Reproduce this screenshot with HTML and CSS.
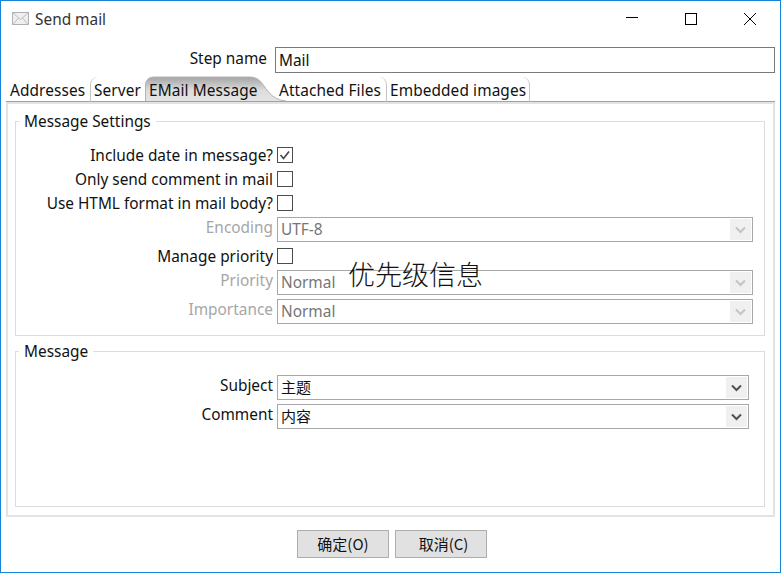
FILE: index.html
```html
<!DOCTYPE html>
<html lang="en">
<head>
<meta charset="utf-8">
<title>Send mail</title>
<link rel="stylesheet" href="styles.css">
</head>
<body>
<div class="window">
  <header class="titlebar">
    <svg class="mail-icon" width="18" height="14" viewBox="0 0 18 14">
      <rect x="0.5" y="0.5" width="16" height="12" fill="#efefef" stroke="#b0b0b0"/>
      <path d="M1 1l7.5 6.5L16 1M1 12.5l5.5-6.5M16 12.5L10.500 6" fill="none" stroke="#bcbcbc"/>
    </svg>
    <span class="title">Send mail</span>
    <div class="controls">
      <svg class="ctl" width="14" height="14" viewBox="0 0 14 14"><path d="M1 5.500h12" stroke="#000" fill="none"/></svg>
      <svg class="ctl" width="14" height="14" viewBox="0 0 14 14"><rect x="1.500" y="1.500" width="11" height="11" stroke="#000" fill="none"/></svg>
      <svg class="ctl" width="14" height="14" viewBox="0 0 14 14"><path d="M1 1l12 12M13 1L1 13" stroke="#000" fill="none"/></svg>
    </div>
  </header>

  <div class="step-row">
    <label class="step-label">Step name</label>
    <div class="step-input">Mail</div>
  </div>

  <nav class="tabs">
    <div class="tab tab-first">Addresses</div>
    <div class="tab tab-server">Server</div>
    <div class="tab tab-active">
      <svg class="tab-shape" width="141" height="26" viewBox="0 0 141 26">
        <defs>
          <linearGradient id="tabfill" x1="0" y1="0" x2="0" y2="1">
            <stop offset="0" stop-color="#a4a4a4"/>
            <stop offset="0.55" stop-color="#dcdcdc"/>
            <stop offset="1" stop-color="#e4e4e4"/>
          </linearGradient>
        </defs>
        <path d="M0.500 25V9C0.500 4 4 1 9 1H104C112 1 115 4 119 10C124 17 129 24 141 25Z" fill="url(#tabfill)"/>
        <path d="M0.500 25V9C0.500 4 4 1 9 1H104C112 1 115 4 119 10C124 17 129 24 141 25" fill="none" stroke="#b4b4b4"/>
      </svg>
      <span class="tab-text">EMail Message</span>
    </div>
    <div class="tab tab-attached">Attached Files</div>
    <div class="tab tab-embedded">Embedded images</div>
  </nav>

  <main class="panel">
    <fieldset class="group group-settings">
      <legend><span class="legend-text">Message Settings</span></legend>
      <div class="row first">
        <label class="lbl">Include date in message?</label>
        <span class="check">
          <svg width="14" height="14" viewBox="0 0 14 14"><path d="M2.500 7l3 3.500L11 3.500" fill="none" stroke="#444" stroke-width="1.600"/></svg>
        </span>
      </div>
      <div class="row">
        <label class="lbl">Only send comment in mail</label>
        <span class="check"></span>
      </div>
      <div class="row">
        <label class="lbl">Use HTML format in mail body?</label>
        <span class="check"></span>
      </div>
      <div class="row near">
        <label class="lbl off up">Encoding</label>
        <div class="combo off"><span class="val">UTF-8</span><span class="arrow"><svg width="11" height="8" viewBox="0 0 11 8"><path d="M1 1.500l4.500 4.500L10 1.500" fill="none" stroke="#c4c4c4" stroke-width="2"/></svg></span></div>
      </div>
      <div class="row near">
        <label class="lbl">Manage priority</label>
        <span class="check"></span>
      </div>
      <div class="row near">
        <label class="lbl off up">Priority</label>
        <div class="combo off"><span class="val">Normal</span><span class="arrow"><svg width="11" height="8" viewBox="0 0 11 8"><path d="M1 1.500l4.500 4.500L10 1.500" fill="none" stroke="#c4c4c4" stroke-width="2"/></svg></span></div>
      </div>
      <div class="row tight">
        <label class="lbl off up">Importance</label>
        <div class="combo off"><span class="val">Normal</span><span class="arrow"><svg width="11" height="8" viewBox="0 0 11 8"><path d="M1 1.500l4.500 4.500L10 1.500" fill="none" stroke="#c4c4c4" stroke-width="2"/></svg></span></div>
      </div>
      <div class="overlay-note">优先级信息</div>
    </fieldset>

    <fieldset class="group group-message">
      <legend><span class="legend-text">Message</span></legend>
      <div class="row first">
        <label class="lbl up">Subject</label>
        <div class="combo"><span class="val cjk">主题</span><span class="arrow"><svg width="11" height="8" viewBox="0 0 11 8"><path d="M1 1.500l4.500 4.500L10 1.500" fill="none" stroke="#505050" stroke-width="2"/></svg></span></div>
      </div>
      <div class="row tight">
        <label class="lbl up">Comment</label>
        <div class="combo"><span class="val cjk">内容</span><span class="arrow"><svg width="11" height="8" viewBox="0 0 11 8"><path d="M1 1.500l4.500 4.500L10 1.500" fill="none" stroke="#505050" stroke-width="2"/></svg></span></div>
      </div>
    </fieldset>
  </main>

  <footer class="buttons">
    <button class="btn">确定(O)</button>
    <button class="btn btn-cancel">取消(C)</button>
  </footer>
</div>
</body>
</html>
```

FILE: styles.css
```css
* { box-sizing: border-box; }
html, body { margin: 0; padding: 0; }
body {
  width: 781px;
  height: 573px;
  overflow: hidden;
  background: #fff;
  font-family: "Noto Sans", "Noto Sans CJK SC", sans-serif;
  font-size: 15.4px;
  color: #111;
}
.window {
  width: 781px;
  height: 573px;
  border: 1px solid #1483d8;
  display: flex;
  flex-direction: column;
  background: #fff;
}
.titlebar {
  height: 38px;
  flex: none;
  display: flex;
  align-items: center;
  padding: 0 23px 2px 11px;
}
.mail-icon { flex: none; }
.title { margin-left: 5px; color: #333; }
.controls {
  margin-left: auto;
  display: flex;
  gap: 45px;
}
.ctl { display: block; }
.step-row {
  flex: none;
  height: 26px;
  margin-top: 8px;
  margin-right: 5px;
  display: flex;
  align-items: center;
  justify-content: flex-end;
}
.step-label { margin-right: 8px; position: relative; bottom: 2px; }
.step-input {
  width: 500px;
  height: 26px;
  border: 1px solid #7a7a7a;
  padding-left: 3px;
  line-height: 25px;
}
.tabs {
  flex: none;
  height: 25px;
  margin-top: 4px;
  margin-left: 5px;
  margin-right: 5px;
  display: flex;
  border-bottom: 1px solid #a0a0a0;
  line-height: 28px;
  letter-spacing: 0.1px;
}
.tab { height: 25px; position: relative; white-space: nowrap; }
.tab-first { width: 84px; padding-left: 4px; }
.tab-server {
  width: 55px;
  padding-left: 3px;
  border-left: 1px solid #c4c4c4;
  border-top-left-radius: 8px;
}
.tab-active {
  width: 134px;
  padding-left: 4px;
}
.tab-shape { position: absolute; left: 0; top: -1px; }
.tab-text { position: relative; }
.tab-attached {
  width: 108px;
  padding-left: 0;
  border-right: 1px solid #c4c4c4;
  border-top-right-radius: 8px;
}
.tab-embedded {
  width: 143px;
  padding-left: 3px;
  border-right: 1px solid #c4c4c4;
  border-top-right-radius: 8px;
}
.panel {
  flex: none;
  height: 415px;
  margin: 0 5px;
  border: 2px solid #e3e3e3;
  padding: 7px 8px 0 7px;
}
.group {
  position: relative;
  margin: 0;
  border: 1px solid #dcdcdc;
  min-width: 0;
}
.group legend {
  margin-left: 3px;
  padding: 0 5px;
  line-height: 20px;
}
.legend-text { position: relative; top: 1px; }
.group-settings { height: 225px; padding: 0 11px 0 0; }
.group-message { height: 166px; margin-top: 5px; padding: 0 15px 0 0; }
.row {
  display: flex;
  align-items: center;
  margin-top: 8px;
}
.row.near { margin-top: 6px; }
.row.tight { margin-top: 4px; }
.group-settings .row.first { margin-top: 16px; }
.group-message .row.first { margin-top: 14px; }
.lbl {
  display: block;
  width: 257px;
  flex: none;
  text-align: right;
  white-space: nowrap;
  height: 16px;
  line-height: 18px;
}
.lbl.off { color: #a6a6a6; }
.lbl.up { position: relative; bottom: 3px; }
.combo .val { display: block; }
.check {
  width: 16px;
  height: 16px;
  margin-left: 4px;
  flex: none;
  border: 1px solid #4c4c4c;
  background: #fff;
  display: flex;
  align-items: center;
  justify-content: center;
}
.check svg { display: block; }
.combo {
  margin-left: 4px;
  flex: 1;
  height: 25px;
  border: 1px solid #a8a8a8;
  display: flex;
  align-items: center;
  justify-content: space-between;
  padding-left: 3px;
  padding-right: 1px;
  background: #fff;
}
.combo.off .val { color: #757575; }
.val.cjk {
  font-family: "Noto Sans CJK SC", sans-serif;
  font-size: 15px;
  color: #111;
  line-height: 20px;
  padding-bottom: 2px;
}
.arrow {
  width: 21px;
  height: 21px;
  background: #f0f0f0;
  display: flex;
  align-items: center;
  justify-content: center;
}
.arrow svg { display: block; }
.overlay-note {
  position: absolute;
  left: 332px;
  top: 128px;
  font-family: "Noto Sans CJK SC", sans-serif;
  font-size: 27px;
  font-weight: 300;
  line-height: 30px;
  color: #111;
  white-space: nowrap;
}
.buttons {
  flex: 1;
  display: flex;
  justify-content: center;
  gap: 6px;
  padding-top: 13px;
  padding-left: 3px;
}
.btn {
  width: 92px;
  height: 28px;
  background: #e1e1e1;
  border: 1px solid #adadad;
  font-family: "Noto Sans CJK SC", "Noto Sans", sans-serif;
  font-size: 15px;
  line-height: 20px;
  color: #111;
  padding: 0;
}
.btn-cancel { padding-left: 5px; }
```
